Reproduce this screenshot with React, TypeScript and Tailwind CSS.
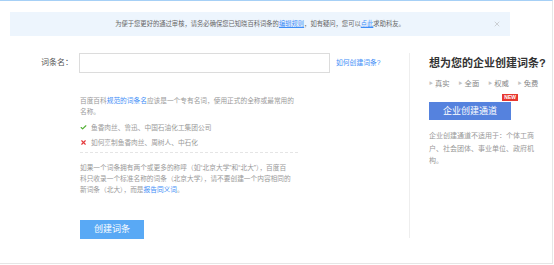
import { X, Check } from 'lucide-react';

const FONT = { fontFamily: '"Liberation Sans", "Noto Sans CJK SC", sans-serif' };

function Notice() {
  return (
    <div className="relative ml-[10px] mt-[11px] flex h-[24px] w-[500px] items-center justify-center bg-[#edf5fd] text-[6.3px] text-[#666]">
      <span>
        为便于您更好的通过审核，请务必确保您已知晓百科词条的
        <span className="text-[#3e8ef7] underline">编辑规则</span>
        ，如有疑问，您可以<span className="text-[#3e8ef7] underline">点此</span>求助科友。
      </span>
      <X className="absolute right-[9px] top-[8px] h-[8px] w-[8px] text-[#aaa]" strokeWidth={1.5} />
    </div>
  );
}

function LeftForm() {
  return (
    <div className="w-[409px] shrink-0">
      <div className="flex items-center pl-[41px] pt-[17px]">
        <span className="w-[38px] text-[8px] text-[#555]">词条名：</span>
        <div className="h-[20px] w-[251px] border border-[#dcdcdc] bg-white" />
        <a className="ml-[6px] text-[6.8px] text-[#3e8ef7]">如何创建词条?</a>
      </div>

      <div className="ml-[80px] mt-[22px] w-[218px] text-[6.7px] leading-[11px] text-[#999]">
        <p>
          百度百科<span className="text-[#3e8ef7]">规范的词条名</span>应该是一个专有名词，使用正式的全称或最常用的
          <br />
          名称。
        </p>
        <div className="mt-[5px] flex items-center gap-[4px]">
          <Check className="h-[7px] w-[7px] text-[#52b035]" strokeWidth={4} />
          <span>鱼香肉丝、鲁迅、中国石油化工集团公司</span>
        </div>
        <div className="mt-[4px] flex items-center gap-[4px]">
          <X className="h-[7px] w-[7px] text-[#e4393c]" strokeWidth={4} />
          <span>如何烹制鱼香肉丝、周树人、中石化</span>
        </div>
        <div className="mt-[4px] border-t border-dashed border-[#e5e5e5]" />
        <p className="mt-[9px]">
          如果一个词条拥有两个或更多的称呼（如“北京大学”和“北大”），百度百
          <br />
          科只收录一个标准名称的词条（北京大学），请不要创建一个内容相同的
          <br />
          新词条（北大），而是<span className="text-[#3e8ef7]">报告同义词</span>。
        </p>
        <button className="mt-[25px] flex h-[19px] w-[64px] items-center justify-center bg-[#59a9f5] text-[9px] text-white">
          创建词条
        </button>
      </div>
    </div>
  );
}

function RightPanel() {
  return (
    <div className="mt-[17px] h-[185px] border-l border-[#eeeeee] pl-[19px]">
      <h2 className="mt-[2px] text-[11px] font-bold text-[#333]">想为您的企业创建词条?</h2>
      <div className="mt-[7px] flex gap-[9px] text-[7.3px] text-[#888]">
        {['真实', '全面', '权威', '免费'].map((t) => (
          <span key={t} className="flex items-center gap-[2px]">
            <span className="text-[4px] text-[#c4c4c4]">▶</span>
            {t}
          </span>
        ))}
      </div>
      <div className="relative mt-[13px] w-[82px]">
        <button className="flex h-[18px] w-[82px] items-center justify-center bg-[#5582de] text-[9px] text-white">
          企业创建通道
        </button>
        <span className="absolute -right-[7px] -top-[8px] bg-[#e8372f] px-[2px] text-[5px] font-bold leading-[7px] text-white">
          NEW
        </span>
      </div>
      <p className="mt-[10px] w-[108px] text-[7px] leading-[12.5px] text-[#999]">
        企业创建通道不适用于：个体工商户、社会团体、事业单位、政府机构。
      </p>
    </div>
  );
}

export default function App() {
  return (
    <div className="h-[265px] w-[554px] bg-white" style={FONT}>
      <div className="h-[264px] w-[553px] border-t border-r border-b border-t-[#a6d0f6] border-r-[#e6e6e6] border-b-[#e6e6e6]">
        <Notice />
        <div className="flex">
          <LeftForm />
          <RightPanel />
        </div>
      </div>
    </div>
  );
}
